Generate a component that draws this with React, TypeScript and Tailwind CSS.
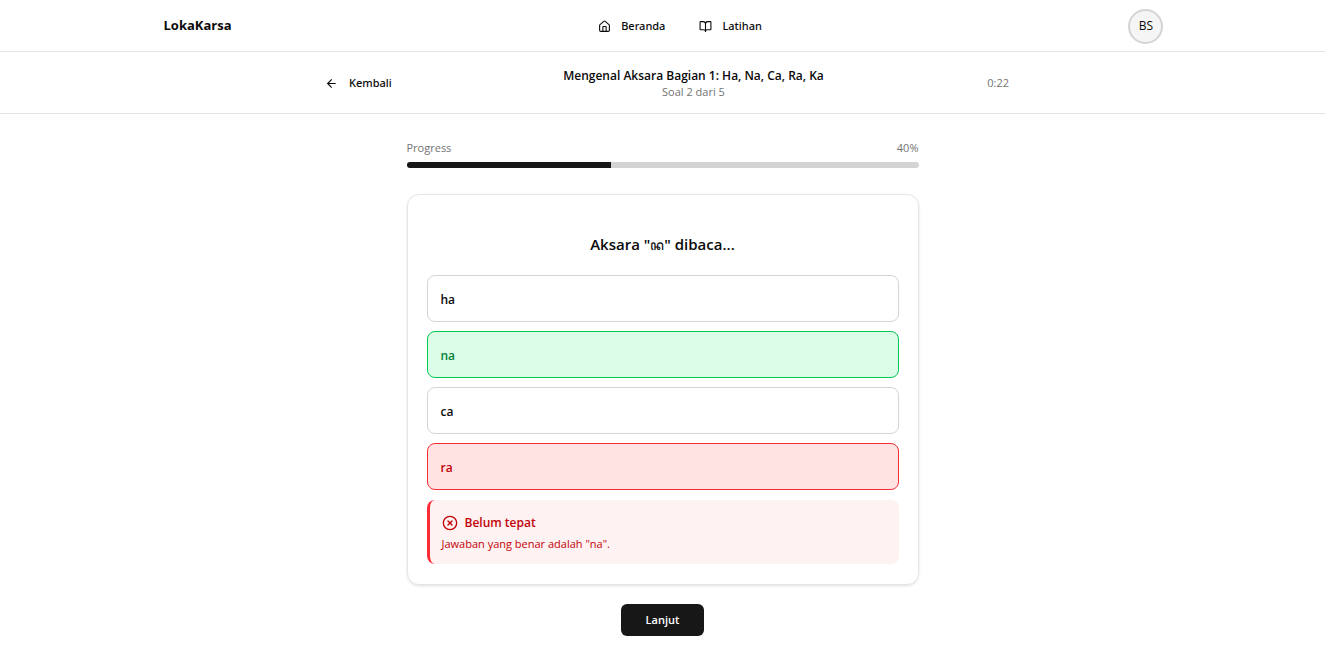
import React, { useState } from 'react'
import { ArrowLeft, BookOpen, CircleX, House } from 'lucide-react'

const options = ['ha', 'na', 'ca', 'ra']
const answer = 'na'

const optionClass = (option: string, selected: string) => {
  if (option === answer) return 'border-green-500 bg-green-100 text-green-700'
  if (option === selected) return 'border-red-500 bg-red-100 text-red-700'
  return 'border-gray-300 bg-white text-neutral-950'
}

function Navbar() {
  return (
    <header className="border-b border-neutral-200">
      <div className="mx-auto flex h-[51px] max-w-[1026px] items-center justify-between pt-px pr-3 pl-[14px]">
        <a href="#" className="text-[13px] font-bold">LokaKarsa</a>
        <nav className="flex items-center gap-[34px] font-['Segoe_UI','Noto_Sans',sans-serif] text-[11px] font-medium">
          <a href="#beranda" className="flex items-center gap-[10px]">
            <House size={13} />
            Beranda
          </a>
          <a href="#latihan" className="flex items-center gap-[10px]">
            <BookOpen size={13} />
            Latihan
          </a>
        </nav>
        <button type="button" className="flex size-[35px] items-center justify-center rounded-full border-2 border-neutral-300 bg-neutral-100 text-xs">
          BS
        </button>
      </div>
    </header>
  )
}

function QuizHeader() {
  return (
    <div className="border-b border-neutral-200">
      <div className="mx-auto flex h-[61px] max-w-[717px] items-center justify-between px-3 pt-px">
        <button type="button" className="flex items-center gap-[11px] px-2 pl-[9px] font-['Segoe_UI','Noto_Sans',sans-serif] text-[11px] font-medium">
          <ArrowLeft size={13} />
          Kembali
        </button>
        <div className="text-center">
          <h1 className="text-xs leading-[17px] font-semibold">Mengenal Aksara Bagian 1: Ha, Na, Ca, Ra, Ka</h1>
          <p className="text-[11px] leading-4 text-neutral-500">Soal 2 dari 5</p>
        </div>
        <div className="text-[11px] text-neutral-500">0:22</div>
      </div>
    </div>
  )
}

export default function App() {
  const [selected] = useState('ra')
  const progress = 40

  return (
    <div className="min-h-screen bg-white font-['Segoe_UI','Open_Sans','Noto_Sans',sans-serif] text-neutral-950">
      <Navbar />
      <QuizHeader />
      <main className="mx-auto max-w-[536px] px-3 pt-[26px] pb-6">
        <div className="flex justify-between text-[11px] leading-4 text-neutral-500">
          <span>Progress</span>
          <span>{progress}%</span>
        </div>
        <div className="mt-[6px] h-[6px] overflow-hidden rounded-full bg-neutral-300">
          <div className="h-full bg-neutral-900" style={{ width: `${progress}%` }} />
        </div>

        <section className="mt-[26px] rounded-xl border border-neutral-200 px-[19px] pt-[37px] pb-5 shadow-sm">
          <h2 className="text-center text-[15px] leading-6 font-semibold">Aksara "<span className="text-sm font-normal">ꦤ</span>" dibaca...</h2>
          <div className="mt-[19px] flex flex-col gap-[9px]">
            {options.map(option => (
              <button
                key={option}
                type="button"
                className={`h-[47px] w-full rounded-lg border px-[13px] pt-[2px] text-left text-xs font-semibold ${optionClass(option, selected)}`}
              >
                {option}
              </button>
            ))}
          </div>
          <div className="mt-[10px] rounded-lg border-l-3 border-red-500 bg-red-50 px-3 pt-[13px] pb-3 text-red-700">
            <div className="flex items-center gap-[7px]">
              <CircleX size={16} />
              <span className="text-xs leading-5 font-semibold">Belum tepat</span>
            </div>
            <p className="mt-[3px] text-[11px] leading-4">Jawaban yang benar adalah "na".</p>
          </div>
        </section>

        <div className="mt-[19px] flex justify-center">
          <button type="button" className="h-8 rounded-md bg-neutral-900 px-[25px] text-[11px] font-semibold text-white">
            Lanjut
          </button>
        </div>
      </main>
    </div>
  )
}
